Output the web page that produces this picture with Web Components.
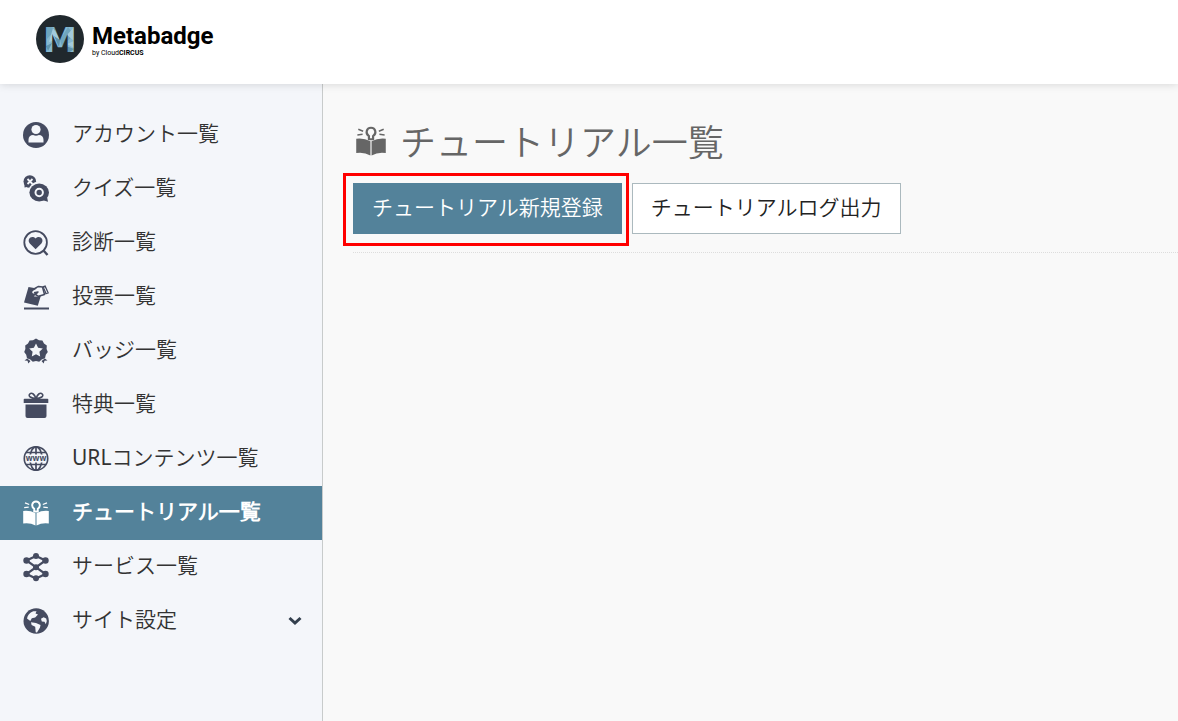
<!DOCTYPE html>
<html lang="ja">
<head>
<meta charset="utf-8">
<meta name="viewport" content="width=device-width, initial-scale=1">
<title>チュートリアル一覧 | Metabadge</title>
<style>
html, body { margin: 0; min-height: 100%; }
body { background: #f9f9f9; color: #333; font: 400 21px/30px "Noto Sans", "Noto Sans CJK JP DemiLight", "Noto Sans CJK JP", sans-serif; }
</style>
</head>
<body>
<mb-app>
  <mb-header slot="header"></mb-header>
  <mb-sidebar slot="sidebar">
    <mb-nav-item icon="user">アカウント一覧</mb-nav-item>
    <mb-nav-item icon="quiz">クイズ一覧</mb-nav-item>
    <mb-nav-item icon="diagnosis">診断一覧</mb-nav-item>
    <mb-nav-item icon="vote">投票一覧</mb-nav-item>
    <mb-nav-item icon="badge">バッジ一覧</mb-nav-item>
    <mb-nav-item icon="gift">特典一覧</mb-nav-item>
    <mb-nav-item icon="www">URLコンテンツ一覧</mb-nav-item>
    <mb-nav-item icon="book" active>チュートリアル一覧</mb-nav-item>
    <mb-nav-item icon="service">サービス一覧</mb-nav-item>
    <mb-nav-item icon="globe" expandable>サイト設定</mb-nav-item>
  </mb-sidebar>
  <mb-page-title icon="book">チュートリアル一覧</mb-page-title>
  <mb-toolbar>
    <mb-button primary highlighted>チュートリアル新規登録</mb-button>
    <mb-button>チュートリアルログ出力</mb-button>
  </mb-toolbar>
</mb-app>

<script>
const ICONS = {
  user: `<circle cx="13" cy="13" r="13"/><circle cx="13" cy="7.500" r="4.600" fill="var(--hole)"/><path fill="var(--hole)" d="M5.500 20.500v-2.700c0-3 2-4.800 4.600-4.800 1.800 1 4 1 5.800 0 2.600 0 4.600 1.800 4.600 4.800v2.700z"/>`,
  quiz: `<circle cx="6.800" cy="5.500" r="6.300"/><path d="M1.500 7v4.500l5-1z"/><path d="M4.500 3l5 5M9.500 3l-5 5" stroke="var(--hole)" stroke-width="1.800"/><circle cx="16.200" cy="16.500" r="11" fill="var(--hole)"/><ellipse cx="16.200" cy="16.500" rx="9.800" ry="9"/><path d="M19 24l6 1.800-1.200-6z"/><circle cx="16.200" cy="16.500" r="3.700" fill="none" stroke="var(--hole)" stroke-width="2"/>`,
  diagnosis: `<circle cx="12.600" cy="12.500" r="11.300" fill="none" stroke="currentColor" stroke-width="1.800"/><path d="M20.500 20.500l4 4.500" stroke="currentColor" stroke-width="2.400"/><path d="M12.600 19.300L6.800 13.500C3.500 9.500 8.500 4.500 12.600 8.600c4.100-4.100 9.100.9 5.800 4.900z"/>`,
  vote: `<path d="M1 24.500h25" stroke="currentColor" stroke-width="2"/><path d="M5.500 3l8.500 1.500-3.500 2c-2 1-1.500 3 .5 3l3-1-3 4h4l3-1.200-3.200 10.500L1 18.500z"/><path d="M11 8.800l4-.8-2.500 2.500 3 1.800 6-1.800-2-7.500-4-.6-5 2.800" fill="none" stroke="currentColor" stroke-width="1.500" stroke-linejoin="round"/><path d="M19.500 2.200l3-1 3.500 8-3.500 1.200z"/><path d="M21.500 3.500l2.500 5.500" stroke="var(--hole)"/>`,
  badge: `<path d="M6 19l-4.500 3.500 3 .3.800 2.700 4-4.500zM20 19l4.500 3.500-3 .3-.8 2.700-4-4.500z"/><circle cx="13" cy="12.200" r="12" fill="var(--hole)"/><path d="M13 .5l3 1.700 3.400.2 1.600 3 2.800 2-.2 3.500 1.200 3.100-2 2.800-.8 3.400-3.300 1.200-2.500 2.300-3.200-.8-3.200.8-2.500-2.300L4 20.200l-.8-3.400-2-2.800 1.200-3.100-.2-3.500 2.800-2 1.600-3 3.400-.2z"/><path fill="var(--hole)" d="M13 5.500l2.100 4.300 4.700.7-3.400 3.300.8 4.700-4.200-2.200-4.200 2.200.8-4.700-3.400-3.300 4.700-.7z"/>`,
  gift: `<path d="M2.500 12.500h21V24q0 2-2 2h-17q-2 0-2-2z"/><path d="M1.500 6.800h23q.8 0 .8.800V11H.7V7.600q0-.8.800-.8z"/><path d="M13 6.500C8 6.500 4.800 4 6.800 2s5 .5 6.200 4.500M13 6.500c5 0 8.200-2.500 6.200-4.500s-5 .5-6.200 4.500" fill="none" stroke="currentColor" stroke-width="1.600"/>`,
  www: `<g fill="none" stroke="currentColor" stroke-width="1.700"><circle cx="13" cy="12.500" r="11.700"/><ellipse cx="13" cy="12.500" rx="6" ry="11.700"/><path d="M13 1v24M3 6.500h20M3 18.500h20"/></g><rect x="2.800" y="8.500" width="20.400" height="8" fill="var(--hole)"/><text x="13" y="15" text-anchor="middle" font-family="Open Sans" font-size="8" font-weight="700">www</text>`,
  book: `<path d="M12.500 25.500Q7 22.500.2 23.500V11q6.800-.8 12.300 2.200zM13.500 25.500q5.500-3 12.300-2V11q-6.800-.8-12.300 2.200z"/><path d="M11.200 11.500V8.800C7.800 6.500 9 1.500 13 1.500S18.200 6.500 14.800 8.800v2.700z" fill="none" stroke="currentColor" stroke-width="1.900"/><path d="M2 2.800l4.200 1.700M1.200 7.700l4.500-.5M24 2.800l-4.200 1.700M24.800 7.700l-4.500-.5" stroke="currentColor" stroke-width="1.300"/>`,
  service: `<g fill="none" stroke="currentColor" stroke-width="2.200"><path d="M13 2L3.500 6.500 22.500 20 13 24.500 3.500 20l19-13.500z"/></g><g><circle cx="13" cy="2" r="3"/><circle cx="3.500" cy="6.500" r="3.200"/><circle cx="22.500" cy="6.500" r="3.200"/><circle cx="13" cy="13.200" r="3"/><circle cx="3.500" cy="20" r="3.200"/><circle cx="22.500" cy="20" r="3.200"/><circle cx="13" cy="24.300" r="3"/></g>`,
  globe: `<circle cx="13.200" cy="13" r="12.700"/><path fill="var(--hole)" d="M13.500 3.200l-3.200.1C6.500 4.600 4.500 7.500 4 10.500l3.300 2.500 1.500-2.800 3.400-.8 2.800-3-2.500-.8zM8 14.200l5 .7 4.500 2.200-.5 2.500-3 4.800-1.300-.2-.5-5.500-3.600-1.800zM18 10.800l2.600-1.600 2.600 1.200.6 2.600-1 3.200-1.300-2.500-2.700-.3z"/>`,
  chevron: `<path d="M7.500 10l5.500 5 5.500-5" fill="none" stroke="currentColor" stroke-width="3"/>`
};

function define(name, html, setup) {
  const template = document.createElement("template");
  template.innerHTML = html;
  customElements.define(name, class extends HTMLElement {
    constructor() {
      super();
      this.attachShadow({ mode: "open" }).append(template.content.cloneNode(true));
    }
    connectedCallback() { if (setup) setup(this, this.shadowRoot); }
  });
}

define("mb-icon", `
<style>
  :host { display: block; flex: none; width: 26px; height: 26px; }
  svg { display: block; width: 100%; height: 100%; overflow: visible; fill: currentColor; }
</style>
<svg viewBox="0 0 26 26" aria-hidden="true"></svg>`,
(host, root) => { root.querySelector("svg").innerHTML = ICONS[host.getAttribute("name")] || ""; });

define("mb-app", `
<style>
  :host { display: flex; flex-direction: column; min-height: 100vh; }
  .body { display: flex; flex: 1; }
  main { flex: 1; min-width: 0; box-sizing: border-box; padding: 29px 0 30px 30px; }
</style>
<slot name="header"></slot>
<div class="body"><slot name="sidebar"></slot><main><slot></slot></main></div>`);

define("mb-header", `
<style>
  :host { display: block; position: relative; background: #fff; box-shadow: 0 1px 8px rgba(0,0,0,.13); }
  header { display: flex; align-items: center; box-sizing: border-box; height: 84px; padding: 0 36px 6px; }
  a { display: flex; align-items: center; gap: 8px; color: #000; text-decoration: none; font-family: Roboto, sans-serif; }
  svg { display: block; width: 48px; height: 48px; }
  .words { display: flex; flex-direction: column; padding-top: 1px; }
  .name { font-size: 24px; line-height: 26px; font-weight: 700; }
  .by { font-size: 7px; line-height: 8px; font-weight: 400; }
</style>
<header><a href="#">
  <svg viewBox="0 0 48 48" aria-hidden="true">
    <defs><pattern id="facets" width="48" height="48" patternUnits="userSpaceOnUse">
      <path fill="#86b8d0" d="M0 0h48v48H0z"/>
      <path fill="#6fa5be" d="M10 10l10 4-9 10zM24 25l8-13 6 8-12 11z"/>
      <path fill="#a3cbdc" d="M17 13l7 11-11 3zM31 20l7-8v14zM31 29l7-3v7z"/>
      <path fill="#5f93ac" d="M10 31l6-3-4 8zM18 21l6 4-1 7zM30 31l8 3-7 5z"/>
    </pattern></defs>
    <circle cx="24" cy="24" r="24" fill="#20282d"/>
    <text x="24" y="37" text-anchor="middle" font-family="DejaVu Sans" font-size="34" font-weight="700" fill="url(#facets)">M</text>
  </svg>
  <span class="words"><span class="name">Metabadge</span><span class="by">by Cloud<b>CIRCUS</b></span></span>
</a></header>`);

define("mb-sidebar", `
<style>
  :host { display: block; flex: none; width: 322px; padding-top: 24px; background: #f4f6fa; border-right: 1px solid #c8cbcb; }
  nav { display: flex; flex-direction: column; }
</style>
<nav aria-label="メインメニュー"><slot></slot></nav>`);

define("mb-nav-item", `
<style>
  :host { display: block; --hole: #f4f6fa; }
  a { display: flex; align-items: center; gap: 23px; box-sizing: border-box; height: 54px; padding: 0 14px 0 23px; color: #333; text-decoration: none; }
  .label { flex: 1; padding-bottom: 4px; white-space: nowrap; }
  mb-icon { color: #454b60; }
  .chevron { display: none; }
  :host([expandable]) .chevron { display: block; color: #333f4d; }
  :host([active]) { --hole: #53829a; background: #53829a; font-weight: 700; }
  :host([active]) a, :host([active]) mb-icon { color: #fff; }
</style>
<a href="#"><mb-icon class="icon"></mb-icon><span class="label"><slot></slot></span><mb-icon class="chevron" name="chevron"></mb-icon></a>`,
(host, root) => {
  const icon = document.createElement("mb-icon");
  icon.setAttribute("name", host.getAttribute("icon"));
  root.querySelector(".icon").replaceWith(icon);
  if (host.hasAttribute("active")) root.querySelector("a").setAttribute("aria-current", "page");
});

define("mb-page-title", `
<style>
  :host { display: block; --hole: #f9f9f9; }
  h1 { display: flex; align-items: center; gap: 14px; margin: 0; padding-left: 3px; color: #666; font-size: 36px; line-height: 52px; font-weight: inherit; }
  span { padding-top: 4px; }
  mb-icon { width: 30px; height: 30px; }
</style>
<h1><mb-icon></mb-icon><span><slot></slot></span></h1>`,
(host, root) => {
  const icon = document.createElement("mb-icon");
  icon.setAttribute("name", host.getAttribute("icon"));
  root.querySelector("mb-icon").replaceWith(icon);
});

define("mb-toolbar", `
<style>
  :host { display: flex; gap: 10px; padding: 14px 0 18px; border-bottom: 1px dotted #ddd; }
</style>
<slot></slot>`);

define("mb-button", `
<style>
  :host { display: block; position: relative; }
  button { display: block; box-sizing: border-box; height: 51px; margin: 0; padding: 0 18px 4px; border: 1px solid #abb9be; border-radius: 0; background: #fff; color: #222; font: inherit; white-space: nowrap; cursor: pointer; }
  :host([primary]) button { background: #53829a; border-color: #53829a; color: #fff; }
  :host([highlighted])::after { content: ""; position: absolute; inset: -10px -7px -12px -10px; border: 3px solid #f00; pointer-events: none; }
</style>
<button type="button"><slot></slot></button>`);
</script>
</body>
</html>
